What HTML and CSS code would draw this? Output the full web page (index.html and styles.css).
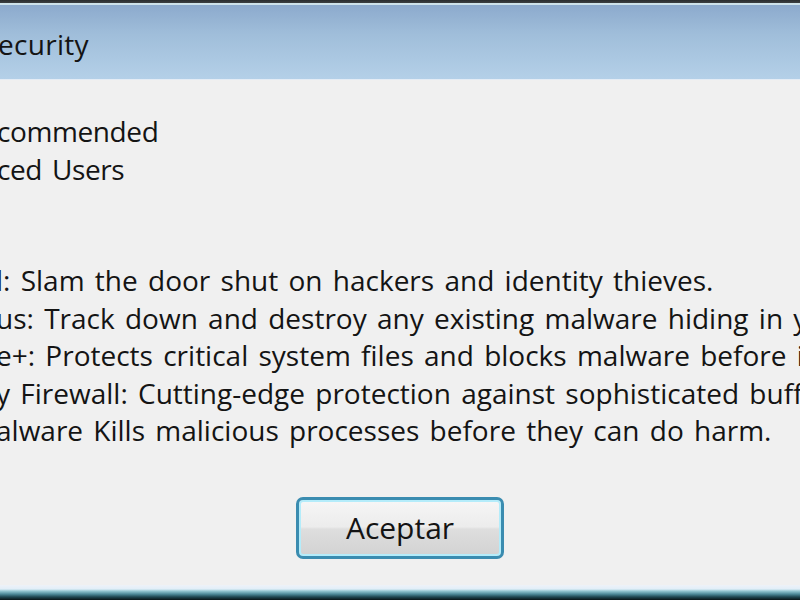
FILE: index.html
```html
<!DOCTYPE html>
<html lang="en">
  <head>
    <meta charset="UTF-8" />
    <meta name="viewport" content="width=device-width, initial-scale=1.0" />
    <title>Security</title>
    <link rel="stylesheet" href="styles.css">
  </head>
  <body>
    <div class="dialog">
      <div class="dialog__frame-top"></div>
      <header class="dialog__header">
        <p class="dialog__title">ecurity</p>
      </header>
      <main class="dialog__body">
        <ul class="options">
          <li class="options__item">commended</li>
          <li class="options__item">ced Users</li>
        </ul>
        <ul class="features">
          <li class="features__item">l: Slam the door shut on hackers and identity thieves.</li>
          <li class="features__item">us: Track down and destroy any existing malware hiding in your PC.</li>
          <li class="features__item">e+: Protects critical system files and blocks malware before it installs.</li>
          <li class="features__item">y Firewall: Cutting-edge protection against sophisticated buffer overflow attacks.</li>
          <li class="features__item">alware Kills malicious processes before they can do harm.</li>
        </ul>
        <div class="dialog__actions">
          <button class="button button--default">Aceptar</button>
        </div>
      </main>
      <div class="dialog__frame-bottom"></div>
    </div>
  </body>
</html>
```

FILE: styles.css
```css
html {
  background-color: rgb(240, 240, 240);
}
body {
  margin: 0;
  font-family: "Open Sans", "DejaVu Sans", sans-serif;
  color: rgb(20, 20, 20);
}
p {
  margin: 0;
}
ul {
  margin: 0;
  padding: 0;
  list-style: none;
}
.dialog {
  display: flex;
  flex-direction: column;
  height: 600px;
  overflow: hidden;
}
.dialog__frame-top {
  height: 5px;
  background: linear-gradient(
    to bottom,
    rgb(40, 44, 46) 0,
    rgb(60, 64, 66) 3px,
    rgb(205, 226, 234) 3px,
    rgb(205, 226, 234) 5px
  );
}
.dialog__header {
  height: 74px;
  border-bottom: 1px solid rgb(228, 236, 245);
  background: linear-gradient(
    to bottom,
    rgb(140, 170, 205) 0%,
    rgb(160, 190, 218) 40%,
    rgb(180, 208, 232) 100%
  );
  display: flex;
  align-items: center;
}
.dialog__title {
  font-size: 28px;
  line-height: 38px;
  margin-top: 4px;
  margin-left: -2px;
  letter-spacing: 0.3px;
  white-space: nowrap;
}
.dialog__body {
  flex: 1;
  display: flex;
  flex-direction: column;
  background-color: rgb(240, 240, 240);
  font-size: 28px;
  word-spacing: 3px;
  white-space: nowrap;
}
.options {
  margin-top: 32px;
  margin-left: -3px;
  letter-spacing: -0.4px;
}
.options__item {
  line-height: 38px;
}
.features {
  margin-top: 74px;
  margin-left: -4px;
}
.features__item {
  line-height: 37.5px;
}
.dialog__actions {
  display: flex;
  justify-content: center;
  margin-top: 47px;
}
.button {
  width: 208px;
  height: 62px;
  font-family: inherit;
  font-size: 30px;
  color: rgb(20, 20, 20);
  border-radius: 7px;
  cursor: pointer;
}
.button--default {
  border: 3px solid rgb(58, 140, 176);
  box-shadow: inset 0 0 0 2px rgb(180, 236, 250);
  background: linear-gradient(
    to bottom,
    rgb(246, 246, 246) 0%,
    rgb(236, 236, 236) 48%,
    rgb(222, 222, 222) 52%,
    rgb(210, 210, 210) 100%
  );
}
.dialog__frame-bottom {
  height: 15px;
  background: linear-gradient(
    to bottom,
    rgb(238, 242, 248) 0,
    rgb(225, 238, 248) 4px,
    rgb(150, 200, 210) 6px,
    rgb(80, 140, 155) 9px,
    rgb(30, 70, 80) 12px,
    rgb(10, 20, 22) 15px
  );
}
```
